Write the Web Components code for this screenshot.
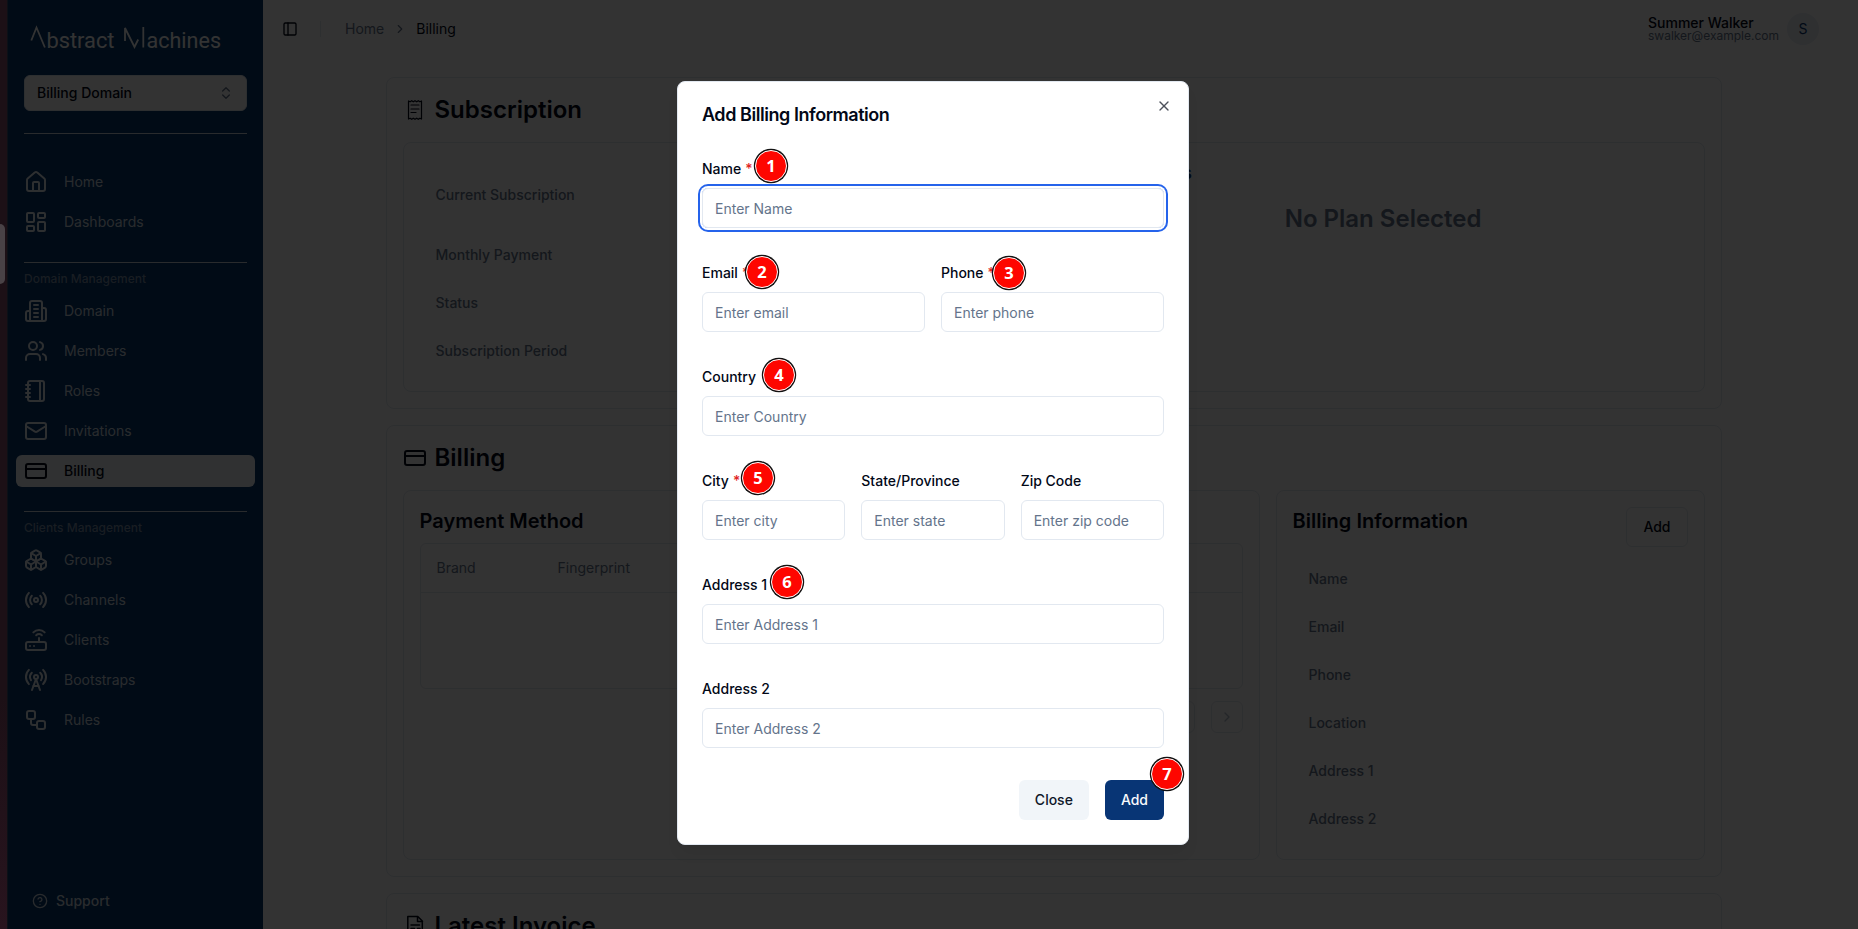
<!DOCTYPE html>
<html lang="en">
<head>
<meta charset="utf-8">
<title>Billing</title>
<style>
html,body{margin:0;height:100%;overflow:hidden}
body{font-family:Inter,"Liberation Sans",sans-serif;font-size:14px;color:#020817;background:#fff}
</style>
</head>
<body>
<billing-app></billing-app>
<script>
const ICONS={
home:'<path d="M15 21v-8a1 1 0 0 0-1-1h-4a1 1 0 0 0-1 1v8"/><path d="M3 10a2 2 0 0 1 .709-1.528l7-5.999a2 2 0 0 1 2.582 0l7 5.999A2 2 0 0 1 21 10v9a2 2 0 0 1-2 2H5a2 2 0 0 1-2-2z"/>',
dash:'<rect width="7" height="9" x="3" y="3" rx="1"/><rect width="7" height="5" x="14" y="3" rx="1"/><rect width="7" height="9" x="14" y="12" rx="1"/><rect width="7" height="5" x="3" y="16" rx="1"/>',
building:'<path d="M6 22V4a2 2 0 0 1 2-2h8a2 2 0 0 1 2 2v18Z"/><path d="M6 12H4a2 2 0 0 0-2 2v6a2 2 0 0 0 2 2h2"/><path d="M18 9h2a2 2 0 0 1 2 2v9a2 2 0 0 1-2 2h-2"/><path d="M10 6h4M10 10h4M10 14h4M10 18h4"/>',
users:'<path d="M16 21v-2a4 4 0 0 0-4-4H6a4 4 0 0 0-4 4v2"/><circle cx="9" cy="7" r="4"/><path d="M22 21v-2a4 4 0 0 0-3-3.87"/><path d="M16 3.13a4 4 0 0 1 0 7.75"/>',
notebook:'<path d="M2 6h4M2 10h4M2 14h4M2 18h4"/><rect width="16" height="20" x="4" y="2" rx="2"/><path d="M16 2v20"/>',
mail:'<rect width="20" height="16" x="2" y="4" rx="2"/><path d="m22 7-8.97 5.7a1.94 1.94 0 0 1-2.06 0L2 7"/>',
card:'<rect width="20" height="14" x="2" y="5" rx="2"/><line x1="2" x2="22" y1="10" y2="10"/>',
boxes:'<path d="M2.97 12.92A2 2 0 0 0 2 14.63v3.24a2 2 0 0 0 .97 1.71l3 1.8a2 2 0 0 0 2.06 0L12 19v-5.5l-5-3-4.03 2.42Z"/><path d="m7 16.5-4.74-2.85"/><path d="m7 16.5 5-3"/><path d="M7 16.5v5.17"/><path d="M12 13.5V19l3.97 2.38a2 2 0 0 0 2.06 0l3-1.8a2 2 0 0 0 .97-1.71v-3.24a2 2 0 0 0-.97-1.71L17 10.5l-5 3Z"/><path d="m17 16.5-5-3"/><path d="m17 16.5 4.74-2.85"/><path d="M17 16.5v5.17"/><path d="M7.97 4.42A2 2 0 0 0 7 6.13v4.37l5 3 5-3V6.13a2 2 0 0 0-.97-1.71l-3-1.8a2 2 0 0 0-2.06 0l-3 1.8Z"/><path d="M12 8 7.26 5.15"/><path d="m12 8 4.74-2.85"/><path d="M12 13.5V8"/>',
radio:'<path d="M4.9 19.1C1 15.2 1 8.8 4.9 4.9"/><path d="M7.8 16.2c-2.3-2.3-2.3-6.1 0-8.5"/><circle cx="12" cy="12" r="2"/><path d="M16.2 7.8c2.3 2.3 2.3 6.1 0 8.5"/><path d="M19.1 4.9C23 8.8 23 15.1 19.1 19"/>',
router:'<rect width="20" height="8" x="2" y="14" rx="2"/><path d="M6.01 18H6M10.01 18H10M15 10v4"/><path d="M17.84 7.17a4 4 0 0 0-5.66 0"/><path d="M20.66 4.34a8 8 0 0 0-11.31 0"/>',
tower:'<path d="M4.9 16.1C1 12.2 1 5.8 4.9 1.9"/><path d="M7.8 4.7a6.14 6.14 0 0 0-.8 7.5"/><circle cx="12" cy="9" r="2"/><path d="M16.2 4.8c2 2 2.26 5.11.8 7.47"/><path d="M19.1 1.9a9.96 9.96 0 0 1 0 14.1"/><path d="M9.5 18h5"/><path d="m8 22 4-11 4 11"/>',
flow:'<rect width="8" height="8" x="3" y="3" rx="2"/><path d="M7 11v4a2 2 0 0 0 2 2h4"/><rect width="8" height="8" x="13" y="13" rx="2"/>',
help:'<circle cx="12" cy="12" r="10"/><path d="M9.09 9a3 3 0 0 1 5.83 1c0 2-3 3-3 3"/><path d="M12 17h.01"/>',
updown:'<path d="m7 15 5 5 5-5"/><path d="m7 9 5-5 5 5"/>',
panel:'<rect width="18" height="18" x="3" y="3" rx="2"/><path d="M9 3v18"/>',
right:'<path d="m9 18 6-6-6-6"/>',
x:'<path d="M18 6 6 18"/><path d="m6 6 12 12"/>',
receipt:'<path d="M5.5 3v18M18.5 3v18M5.5 3l1.6 .8 1.6-1.1 1.6 1.1L12 2.7l1.7 1.1 1.6-1.1 1.6 1.1 1.6-.8M5.5 21l1.6-.8 1.6 1.1 1.6-1.1 1.7 1.1 1.7-1.1 1.6 1.1 1.6-1.1 1.6.8M8 7h8M8 11h8M8 14.500h5"/>',
invoice:'<path d="M4.800 2.500h10l4.500 4.500v14.500h-14.500zM14.500 2.500v5h5M8 11h8.500M8 14.500h3.500M14.500 14.500h2.500M8 18h3.500M14.500 18h2.500"/>'
};
function define(name,render){
  customElements.define(name,class extends HTMLElement{
    constructor(){super();this.attachShadow({mode:'open'})}
    connectedCallback(){const t=document.createElement('template');t.innerHTML=render(this);this.shadowRoot.replaceChildren(t.content.cloneNode(true))}
  });
}
define('ui-icon',e=>`<style>:host{display:block;flex:none;width:${e.getAttribute('size')||24}px;height:${e.getAttribute('size')||24}px}svg{display:block;width:100%;height:100%}</style>
<svg viewBox="0 0 24 24" fill="none" stroke="currentColor" stroke-width="${e.getAttribute('stroke')||2}" stroke-linecap="round" stroke-linejoin="round">${ICONS[e.getAttribute('name')]}</svg>`);

define('nav-item',e=>`<style>:host{display:flex;height:32px;margin:0 8px 8px;padding:0 8px;border-radius:6px;align-items:center;gap:16px;color:#cbd5e1;box-sizing:border-box;line-height:20px}
:host([active]){background:#f1f5f9;color:#020817;font-weight:500}ui-icon{color:#e2e8f0}:host([active]) ui-icon{color:#020817}</style>
<ui-icon name="${e.getAttribute('icon')}"></ui-icon><span><slot></slot></span>`);

define('nav-group',e=>`<style>:host{display:block;border:0}.rule{height:1px;background:#cbd5e1;margin:0 16px}.label{font-size:12px;font-weight:500;line-height:16px;height:16px;margin:8px 16px 8px;color:#94a3b8;opacity:.82}</style>
<div class="rule"></div>${e.getAttribute('label')?`<div class="label">${e.getAttribute('label')}</div>`:''}<slot></slot>`);

define('app-sidebar',()=>`<style>
:host{display:flex;flex-direction:column;width:255px;flex:none;background:#05376d;color:#cbd5e1}
.logo{height:75px;box-sizing:border-box;padding:24px 0 0 22px}
.logo svg{display:block}
.select{height:36px;box-sizing:border-box;margin:0 16px 22px;padding:0 12px;line-height:20px;background:#fff;border:1px solid #e2e8f0;border-radius:6px;display:flex;align-items:center;justify-content:space-between;color:#020817;font-weight:500}
.select ui-icon{color:#64748b}
nav-group{margin-bottom:16px}
nav-group.first nav-item:first-of-type{margin-top:32px}
.support{margin:auto 0 18px 24px;display:flex;gap:8px;align-items:center;height:20px;line-height:20px;font-weight:500}
</style>
<div class="logo"><svg width="196" height="28" viewBox="0 0 196 28" fill="none" stroke="#fff" stroke-width="1.8"><path d="M1.300 16.500 6.500 3.500l8.400 20M95 17V4l9.500 19 3.700-7.500M113.300 3v20.500"/><g fill="#fff" stroke="none" font-family="Roboto,sans-serif" font-size="22"><text x="16.500" y="23.500" textLength="68" lengthAdjust="spacingAndGlyphs">bstract</text><text x="116.500" y="23.500" textLength="74.500" lengthAdjust="spacingAndGlyphs">achines</text></g></svg></div>
<div class="select">Billing Domain<ui-icon name="updown" size="16"></ui-icon></div>
<nav-group class="first"><nav-item icon="home">Home</nav-item><nav-item icon="dash">Dashboards</nav-item></nav-group>
<nav-group label="Domain Management"><nav-item icon="building">Domain</nav-item><nav-item icon="users">Members</nav-item><nav-item icon="notebook">Roles</nav-item><nav-item icon="mail">Invitations</nav-item><nav-item icon="card" active>Billing</nav-item></nav-group>
<nav-group label="Clients Management"><nav-item icon="boxes">Groups</nav-item><nav-item icon="radio">Channels</nav-item><nav-item icon="router">Clients</nav-item><nav-item icon="tower">Bootstraps</nav-item><nav-item icon="flow">Rules</nav-item></nav-group>
<div class="support"><ui-icon name="help" size="16"></ui-icon>Support</div>`);

define('top-bar',()=>`<style>
:host{display:flex;height:58px;box-sizing:border-box;align-items:center;padding:0 39px 0 19px;color:#64748b}
.sep{width:1px;height:16px;background:#e2e8f0;margin:0 24px 0 22px}
.chev{margin:0 9px}
.cur{color:#020817}
.crumbs{display:flex;align-items:center;line-height:20px}
.user{margin-left:auto;display:flex;flex-direction:column;font-size:12px;line-height:12px;margin-right:8px}
.user b{font-size:14px;line-height:14px;font-weight:500;color:#020817}
.av{width:32px;height:32px;border-radius:50%;background:#e8eef6;display:grid;place-items:center;line-height:20px;color:#073571;font-size:14px}
</style><div class="crumbs"><ui-icon name="panel" size="16" style="color:#020817"></ui-icon><div class="sep"></div><span>Home</span><ui-icon class="chev" name="right" size="14"></ui-icon><span class="cur">Billing</span></div>
<div class="user"><b>Summer Walker</b><span>swalker@example.com</span></div><div class="av">S</div>`);

define('section-card',e=>`<style>:host{display:block;box-sizing:border-box;border:1px solid #e2e8f0;border-radius:8px;padding:16px;height:${e.getAttribute('h')}px;flex:none}
h2{display:flex;align-items:center;gap:8px;font-size:24px;font-weight:600;line-height:32px;margin:0 0 16px}</style>
<h2><ui-icon name="${e.getAttribute('icon')}" stroke="${e.getAttribute('stroke')||2}"></ui-icon>${e.getAttribute('heading')}</h2><slot></slot>`);

define('sub-panel',()=>`<style>:host{display:block;box-sizing:border-box;border:1px solid #e2e8f0;border-radius:8px;color:#64748b}</style><slot></slot>`);

define('subscription-card',()=>`<style>:host{display:block}sub-panel{height:250px;display:flex;font-weight:500;position:relative}
.l{padding:42px 32px 0 32px;line-height:20px;width:500px}.l div{height:48px}.l div:first-child{height:60px}
.s{position:absolute;right:511.500px;top:18px;font-size:18px;font-weight:600;line-height:24px;color:#073571}
.r{font-size:24px;font-weight:600;line-height:32px;margin:60px 222px 0 auto}</style>
<section-card heading="Subscription" icon="receipt" stroke="1.2" h="332"><sub-panel><div class="l"><div>Current Subscription</div><div>Monthly Payment</div><div>Status</div><div>Subscription Period</div></div><div class="s">s</div><div class="r">No Plan Selected</div></sub-panel></section-card>`);

define('billing-card',()=>`<style>:host{display:block}.row{display:grid;grid-template-columns:857px 1fr;grid-template-rows:370px;gap:16px}
h3{margin:0;font-size:20px;line-height:28px;font-weight:600;color:#020817}
.pay{padding:16px}.pay h3{margin-bottom:8px}
.table{border:1px solid #e2e8f0;border-radius:6px;height:146px;box-sizing:border-box}
.th{display:flex;height:48px;align-items:center;border-bottom:1px solid #e2e8f0;padding-left:16px}.th span{padding-bottom:1px}.th span:first-child{width:121px}
.pg{display:flex;justify-content:flex-end;gap:16px;margin-top:12px}.pg div{width:32px;height:32px;border:1px solid #e2e8f0;border-radius:6px;box-sizing:border-box;display:grid;place-items:center;color:#94a3b8}
.pg ui-icon{opacity:.7}
.info{padding:16px}.head{display:flex;justify-content:space-between;height:40px}
.btn{height:40px;box-sizing:border-box;border:1px solid #e2e8f0;border-radius:6px;padding:0 16px;line-height:38px;color:#020817;font-weight:500}
.kv{padding:22px 16px 0;font-weight:500;line-height:20px}.kv div{height:48px}.kv div:last-child{height:20px}</style>
<section-card heading="Billing" icon="card" h="452"><div class="row"><sub-panel class="pay"><h3>Payment Method</h3><div class="table"><div class="th"><span>Brand</span><span>Fingerprint</span></div></div><div class="pg"><div></div><div><ui-icon name="right" size="16"></ui-icon></div></div></sub-panel>
<sub-panel class="info"><div class="head"><h3>Billing Information</h3><div class="btn">Add</div></div><div class="kv"><div>Name</div><div>Email</div><div>Phone</div><div>Location</div><div>Address 1</div><div>Address 2</div></div></sub-panel></div></section-card>`);

define('form-field',e=>`<style>:host{display:block}label{display:block;font-weight:500;line-height:14px;height:14px;margin-bottom:12px;white-space:nowrap}i{font-style:normal;color:#e02424;margin-left:4px}
.in{height:40px;box-sizing:border-box;border:1px solid #e2e8f0;border-radius:6px;padding:1px 12px 0;line-height:38px;color:#64748b}
:host([focused]) .in{box-shadow:0 0 0 2px #fff,0 0 0 4px #2563eb}</style>
<label>${e.getAttribute('label')}${e.hasAttribute('required')?'<i>*</i>':''}</label><div class="in">${e.getAttribute('hint')}</div>`);

define('step-badge',()=>`<style>:host{position:absolute;width:30px;height:30px;border-radius:50%;background:#fe0600;border:1px solid #fff;box-shadow:0 0 0 1.200px #111;display:grid;place-items:center;color:#fff;font:700 16.500px/22px "Open Sans","Noto Sans",sans-serif;transform:translate(-16px,-16px)}</style><slot></slot>`);

define('billing-dialog',()=>`<style>
:host{position:absolute;left:677px;top:81px;width:512px;height:764px;box-sizing:border-box;border:1px solid #e2e8f0;border-radius:8px;background:#fff;padding:24px;box-shadow:0 10px 15px -3px #0001,0 4px 6px -4px #0001}
h1{margin:0 0 38px;font-size:18px;line-height:18px;font-weight:600;letter-spacing:-.45px}
.close{position:absolute;right:16px;top:16px;opacity:.7}
form{display:flex;flex-direction:column;gap:38px}.g{display:grid;gap:16px}.two{grid-template-columns:1fr 1fr}.three{grid-template-columns:1fr 1fr 1fr}
.foot{display:flex;justify-content:flex-end;gap:16px;margin-top:32px}.b{height:40px;line-height:40px;border-radius:6px;padding:0 16px;font-weight:500;background:#f1f5f9;color:#0f172a}.p{background:#083575;color:#f8fafc}
</style>
<h1>Add Billing Information</h1><div class="close"><ui-icon name="x" size="16"></ui-icon></div>
<form><form-field label="Name" hint="Enter Name" required focused></form-field>
<div class="g two"><form-field label="Email" hint="Enter email" required></form-field><form-field label="Phone" hint="Enter phone" required></form-field></div>
<form-field label="Country" hint="Enter Country"></form-field>
<div class="g three"><form-field label="City" hint="Enter city" required></form-field><form-field label="State/Province" hint="Enter state"></form-field><form-field label="Zip Code" hint="Enter zip code"></form-field></div>
<form-field label="Address 1" hint="Enter Address 1"></form-field><form-field label="Address 2" hint="Enter Address 2"></form-field></form>
<div class="foot"><div class="b">Close</div><div class="b p">Add</div></div>`);

define('billing-app',()=>`<style>
:host{display:block;position:relative;width:1858px;height:929px;overflow:hidden}
.app{display:flex;height:929px}
.edge{width:7px;border-right:1px solid #0c1016;flex:none;background:linear-gradient(#1c1016,#1c1016 75%,#28141e);display:flex;align-items:flex-start}
.grip{width:5px;height:60px;margin-top:224px;border-radius:0 5px 5px 0;background:#494246}
main{flex:1;min-width:0}
.body{margin:19px 0 0 122.500px;width:1336px;display:flex;flex-direction:column;gap:16px}
.shade{position:absolute;inset:0 0 0 8px;background:rgba(0,0,0,.8)}
</style>
<div class="app"><div class="edge"><div class="grip"></div></div><app-sidebar></app-sidebar>
<main><top-bar></top-bar><div class="body"><subscription-card></subscription-card><billing-card></billing-card><section-card heading="Latest Invoice" icon="invoice" stroke="1.5" h="300"></section-card></div></main></div>
<div class="shade"></div><billing-dialog></billing-dialog>
<step-badge style="left:771px;top:166px">1</step-badge><step-badge style="left:762px;top:272px">2</step-badge><step-badge style="left:1009px;top:273px">3</step-badge><step-badge style="left:779px;top:375px">4</step-badge><step-badge style="left:758px;top:478px">5</step-badge><step-badge style="left:787px;top:582px">6</step-badge><step-badge style="left:1167px;top:774px">7</step-badge>`);
</script>
</body>
</html>
